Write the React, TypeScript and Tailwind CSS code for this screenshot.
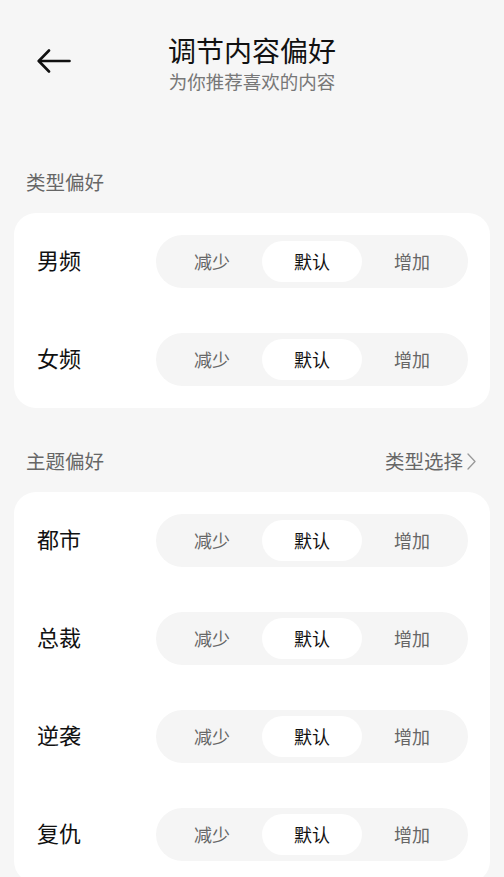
import React from 'react';

const options = ['减少', '默认', '增加'];

const Segmented = ({ value }: { value: number }) => (
  <div className="w-[312px] h-[53px] rounded-full bg-[#f5f5f5] p-[6px] flex">
    {options.map((o, i) => (
      <div
        key={o}
        className={
          i === value
            ? 'flex-1 rounded-full bg-white flex items-center justify-center text-[18px] leading-[24px] pb-[2px] text-[#111]'
            : 'flex-1 rounded-full flex items-center justify-center text-[18px] leading-[24px] pb-[2px] text-[#666]'
        }
      >
        {o}
      </div>
    ))}
  </div>
);

const Row = ({ label }: { label: string }) => (
  <div className="flex items-center justify-between pl-[23px] pr-[22px]">
    <span className="text-[22px] text-[#111] leading-[30px] pb-[5px]">{label}</span>
    <Segmented value={1} />
  </div>
);

const Card = ({ rows }: { rows: string[] }) => (
  <div className="mx-[14px] rounded-[22px] bg-white py-[22px] flex flex-col gap-[45px]">
    {rows.map((r) => (
      <Row key={r} label={r} />
    ))}
  </div>
);

export default function App() {
  return (
    <div
      className="min-h-screen bg-[#f6f6f6] overflow-hidden"
      style={{ fontFamily: '"Noto Sans CJK SC", "Noto Sans", sans-serif' }}
    >
      {/* Header */}
      <div className="grid grid-cols-[1fr_auto_1fr] pt-[33px]">
        <div className="pl-[37px] pt-[15px]">
          <svg width="34" height="26" viewBox="0 0 34 26" fill="none" stroke="#111" strokeWidth="2.6" strokeLinecap="round" strokeLinejoin="round">
            <path d="M32.5 13H2" />
            <path d="M12 2.5L1.8 13L12 23.5" />
          </svg>
        </div>
        <div className="flex flex-col items-center">
          <h1 className="text-[28px] leading-[34px] text-[#111] font-normal">调节内容偏好</h1>
          <p className="mt-[3px] text-[18.5px] leading-[22px] text-[#777]">为你推荐喜欢的内容</p>
        </div>
        <div />
      </div>

      {/* 类型偏好 */}
      <div className="mt-[78px] mb-[19px] px-[26px] text-[19.5px] leading-[24px] text-[#666]">类型偏好</div>
      <Card rows={['男频', '女频']} />

      {/* 主题偏好 */}
      <div className="mt-[41px] mb-[19px] pl-[26px] pr-[28px] flex items-center justify-between text-[19.5px] leading-[24px] text-[#666]">
        <span>主题偏好</span>
        <span className="flex items-center gap-[4px]">
          类型选择
          <svg width="9" height="17" viewBox="0 0 9 17" fill="none" stroke="#999" strokeWidth="1.3" strokeLinecap="round" strokeLinejoin="round">
            <path d="M1 1L8 8.5L1 16" />
          </svg>
        </span>
      </div>
      <Card rows={['都市', '总裁', '逆袭', '复仇']} />
    </div>
  );
}
